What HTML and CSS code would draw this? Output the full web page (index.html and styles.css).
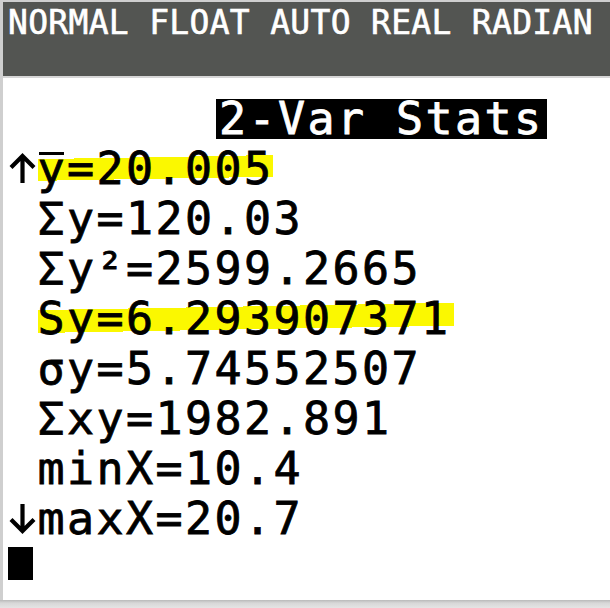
FILE: index.html
```html
<!DOCTYPE html>
<html>
<head>
<meta charset="utf-8">
<link rel="stylesheet" href="styles.css">
</head>
<body>
<div class="screen">
  <div class="status">NORMAL FLOAT AUTO REAL RADIAN</div>
  <div class="output">
    <div class="row"><span class="title">2-Var Stats</span></div>
    <div class="row"><svg class="arrow" viewBox="0 0 29 31" width="29" height="31"><path d="M14.5 30V3M3 14.5L14.5 3L26 14.5" fill="none" stroke="#000" stroke-width="4.2"/></svg><span class="hl hl-one"><span class="bar">y</span>=20.005</span></div>
    <div class="row"> Σy=120.03</div>
    <div class="row"> Σy²=2599.2665</div>
    <div class="row"> <span class="hl hl-two">Sy=6.293907371</span></div>
    <div class="row"> σy=5.74552507</div>
    <div class="row"> Σxy=1982.891</div>
    <div class="row"> minX=10.4</div>
    <div class="row"><svg class="arrow" viewBox="0 0 29 31" width="29" height="31"><path d="M14.5 1V28M3 16.5L14.5 28L26 16.5" fill="none" stroke="#000" stroke-width="4.2"/></svg>maxX=20.7</div>
    <div class="row"><span class="cursor"></span></div>
  </div>
</div>
</body>
</html>
```
FILE: styles.css
```css
html, body {
  margin: 0;
  padding: 0;
}
body {
  width: 610px;
  height: 608px;
  overflow: hidden;
  background: linear-gradient(to bottom, #cfcfcf 0, #cfcfcf 600px, #b9b9b9 600px, #d8d8d8 603px, #e4e4e4 608px);
  font-family: "DejaVu Sans Mono", monospace;
}
.screen {
  margin: 2px 0 0 3px;
  height: 598px;
  background: #ffffff;
  display: flex;
  flex-direction: column;
}
.status {
  height: 76px;
  box-sizing: border-box;
  background: #535552;
  border-bottom: 2px solid #d6d6d6;
  color: #ffffff;
  font-size: 33px;
  line-height: 33px;
  letter-spacing: 0.3px;
  padding: 4px 0 0 5px;
  white-space: pre;
  -webkit-text-stroke: 0.6px #ffffff;
}
.output {
  padding: 16px 0 0 5px;
  color: #000;
  font-size: 45px;
  letter-spacing: 2.4px;
  -webkit-text-stroke: 0.8px #000;
}
.row {
  height: 50px;
  line-height: 50px;
  white-space: pre;
}
.title {
  display: inline-block;
  margin-left: 208px;
  background: #000;
  color: #fff;
  -webkit-text-stroke: 0.8px #fff;
  line-height: 40px;
  height: 40px;
  padding: 0 4px 0 3px;
}
.arrow {
  display: inline-block;
  vertical-align: baseline;
  margin-right: 0.5px;
}
.bar {
  background: linear-gradient(to bottom, transparent 19%, #000 19%, #000 24.5%, transparent 24.5%) no-repeat 1px 0 / 25px 100%;
}
.hl {
  background: linear-gradient(179deg, transparent 0, transparent 30%, #fbf800 30%, #fbf800 68%, transparent 68%);
}
.hl-two {
  padding-right: 4px;
}
.cursor {
  display: inline-block;
  width: 25px;
  height: 33px;
  background: #000;
  vertical-align: top;
  margin-top: 3px;
}
```
